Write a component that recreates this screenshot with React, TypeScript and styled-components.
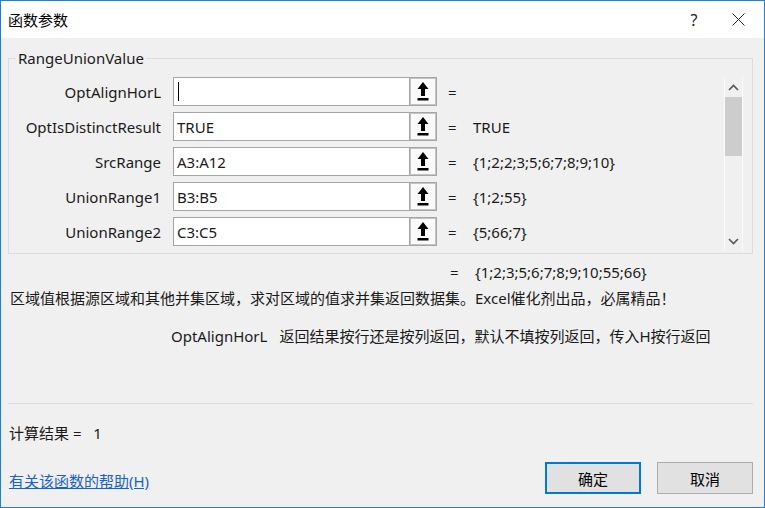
import React from "react";
import styled, { createGlobalStyle } from "styled-components";

const GlobalStyle = createGlobalStyle`
  html, body {
    margin: 0;
    padding: 0;
    background: #f0f0f0;
  }
  * {
    box-sizing: border-box;
  }
`;

const FONT = `"Noto Sans", "Noto Sans CJK SC", sans-serif`;

const Window = styled.div`
  width: 765px;
  height: 508px;
  border: 1px solid #1e7fd6;
  background: #f0f0f0;
  display: flex;
  flex-direction: column;
  font-family: ${FONT};
  font-size: 15px;
  color: #1a1a1a;
  overflow: hidden;
`;

const TitleBar = styled.div`
  height: 37px;
  background: #ffffff;
  display: flex;
  align-items: center;
  padding-left: 7px;
  flex-shrink: 0;
`;

const Title = styled.div`
  flex: 1;
  font-size: 15px;
  color: #000;
`;

const TitleButton = styled.div<{ w: number }>`
  width: ${(p) => p.w}px;
  height: 37px;
  display: flex;
  align-items: center;
  justify-content: center;
  font-size: 16px;
  color: #222;
`;

const Body = styled.div`
  flex: 1;
  display: flex;
  flex-direction: column;
  padding: 10px 11px 0 7px;
`;

const Group = styled.fieldset`
  margin: 0;
  border: 1px solid #dcdcdc;
  padding: 9px 9px 2px 0;
  min-width: 0;
  height: 206px;
`;

const Legend = styled.legend`
  padding: 0 2px;
  margin-left: 7px;
  font-size: 15px;
  line-height: 20px;
  color: #1a1a1a;
`;

const ParamArea = styled.div`
  display: flex;
`;

const ParamList = styled.div`
  flex: 1;
  display: flex;
  flex-direction: column;
  gap: 6px;
`;

const Row = styled.div`
  display: flex;
  align-items: center;
  height: 29px;
`;

const Label = styled.div`
  width: 152px;
  text-align: right;
  margin-right: 12px;
  white-space: nowrap;
`;

const Input = styled.div`
  width: 236px;
  height: 29px;
  background: #fff;
  border: 1px solid #a5a5a5;
  border-right: none;
  display: flex;
  align-items: center;
  padding-left: 3px;
  white-space: nowrap;
`;

const Caret = styled.span`
  display: inline-block;
  width: 1px;
  height: 19px;
  background: #000;
  margin-left: 1px;
`;

const RefButton = styled.div`
  width: 28px;
  height: 29px;
  border: 2px solid #c4c4c4;
  outline: 1px solid #a5a5a5;
  outline-offset: -1px;
  background: #fafafa;
  display: flex;
  align-items: center;
  justify-content: center;
`;

const Eq = styled.span`
  display: inline-block;
  margin-left: 11px;
  width: 25px;
`;

const ResultEq = styled.span`
  display: inline-block;
  width: 25px;
`;

const Value = styled.span`
  white-space: nowrap;
`;

const ScrollBar = styled.div`
  width: 19px;
  height: 174px;
  background: #f0f0f0;
  border-left: 1px solid #fbfbfb;
  border-right: 1px solid #fbfbfb;
  display: flex;
  flex-direction: column;
  align-items: center;
`;

const ScrollArrow = styled.div`
  height: 20px;
  width: 100%;
  display: flex;
  align-items: center;
  justify-content: center;
`;

const Thumb = styled.div`
  width: 17px;
  height: 59px;
  background: #cdcdcd;
`;

const Track = styled.div`
  flex: 1;
`;

const ResultLine = styled.div`
  margin-top: 8px;
  padding-left: 442px;
  height: 20px;
  line-height: 20px;
  white-space: nowrap;
`;

const Description = styled.div`
  margin-top: 6px;
  padding-left: 2px;
  line-height: 20px;
  white-space: nowrap;
`;

const ParamHelp = styled.div`
  margin-top: 18px;
  padding-left: 163px;
  line-height: 20px;
  white-space: nowrap;
  display: flex;
  gap: 12px;
`;

const Separator = styled.div`
  margin-top: 57px;
  height: 1px;
  background: #dcdcdc;
`;

const Result = styled.div`
  margin-top: 19px;
  padding-left: 1px;
  line-height: 20px;
  white-space: nowrap;
`;

const Footer = styled.div`
  margin-top: 19px;
  display: flex;
  align-items: center;
`;

const HelpLink = styled.a`
  flex: 1;
  color: #1763c5;
  text-decoration: underline;
  padding-left: 1px;
  padding-top: 4px;
`;

const DialogButton = styled.div<{ primary?: boolean }>`
  width: 96px;
  height: 32px;
  background: #e1e1e1;
  border: ${(p) => (p.primary ? "2px solid #0078d7" : "1px solid #adadad")};
  display: flex;
  align-items: center;
  justify-content: center;
  margin-left: ${(p) => (p.primary ? "0" : "16px")};
  color: #000;
`;

const UpArrowIcon = () => (
  <svg width="12" height="21" viewBox="0 0 12 21">
    <polygon points="6,1 11.5,8 8,8 8,15 4,15 4,8 0.5,8" fill="#000" />
    <rect x="0.5" y="17" width="11" height="2.5" fill="#000" />
  </svg>
);

const Chevron = ({ up }: { up?: boolean }) => (
  <svg width="11" height="7" viewBox="0 0 11 7">
    <polyline
      points={up ? "1,6 5.5,1.5 10,6" : "1,1 5.5,5.5 10,1"}
      fill="none"
      stroke="#555"
      strokeWidth="1.6"
    />
  </svg>
);

const CloseIcon = () => (
  <svg width="13" height="13" viewBox="0 0 13 13">
    <line x1="0.5" y1="0.5" x2="12.5" y2="12.5" stroke="#222" strokeWidth="1" />
    <line x1="12.5" y1="0.5" x2="0.5" y2="12.5" stroke="#222" strokeWidth="1" />
  </svg>
);

type Param = { name: string; input: string; value: string };

const params: Param[] = [
  { name: "OptAlignHorL", input: "", value: "" },
  { name: "OptIsDistinctResult", input: "TRUE", value: "TRUE" },
  { name: "SrcRange", input: "A3:A12", value: "{1;2;2;3;5;6;7;8;9;10}" },
  { name: "UnionRange1", input: "B3:B5", value: "{1;2;55}" },
  { name: "UnionRange2", input: "C3:C5", value: "{5;66;7}" },
];

export default function App() {
  return (
    <>
      <GlobalStyle />
      <Window>
        <TitleBar>
          <Title>函数参数</Title>
          <TitleButton w={42}>?</TitleButton>
          <TitleButton w={46}>
            <CloseIcon />
          </TitleButton>
          <TitleButton w={3} />
        </TitleBar>
        <Body>
          <Group>
            <Legend>RangeUnionValue</Legend>
            <ParamArea>
              <ParamList>
                {params.map((p, i) => (
                  <Row key={p.name}>
                    <Label>{p.name}</Label>
                    <Input>{i === 0 ? <Caret /> : p.input}</Input>
                    <RefButton>
                      <UpArrowIcon />
                    </RefButton>
                    <Eq>=</Eq>
                    <Value>{p.value}</Value>
                  </Row>
                ))}
              </ParamList>
              <ScrollBar>
                <ScrollArrow>
                  <Chevron up />
                </ScrollArrow>
                <Thumb />
                <Track />
                <ScrollArrow>
                  <Chevron />
                </ScrollArrow>
              </ScrollBar>
            </ParamArea>
          </Group>
          <ResultLine>
            <ResultEq>=</ResultEq>
            {"{1;2;3;5;6;7;8;9;10;55;66}"}
          </ResultLine>
          <Description>
            区域值根据源区域和其他并集区域，求对区域的值求并集返回数据集。Excel催化剂出品，必属精品！
          </Description>
          <ParamHelp>
            <span>OptAlignHorL</span>
            <span>返回结果按行还是按列返回，默认不填按列返回，传入H按行返回</span>
          </ParamHelp>
          <Separator />
          <Result>计算结果 =&nbsp;&nbsp;&nbsp;1</Result>
          <Footer>
            <HelpLink>有关该函数的帮助(H)</HelpLink>
            <DialogButton primary>确定</DialogButton>
            <DialogButton>取消</DialogButton>
          </Footer>
        </Body>
      </Window>
    </>
  );
}
